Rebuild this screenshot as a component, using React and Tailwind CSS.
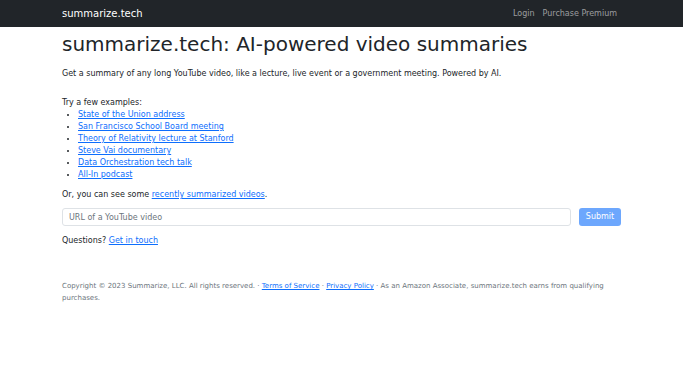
import React from 'react';

const examples = [
  'State of the Union address',
  'San Francisco School Board meeting',
  'Theory of Relativity lecture at Stanford',
  'Steve Vai documentary',
  'Data Orchestration tech talk',
  'All-In podcast',
];

export default function App() {
  return (
    <div className="min-h-screen bg-white text-[#212529] font-['DejaVu_Sans',sans-serif] text-[8px] leading-[12px]">
      <nav className="h-[27px] bg-[#212529] flex items-center justify-between px-[62px]">
        <a href="#" className="text-white text-[10px]">summarize.tech</a>
        <div className="flex gap-[8px] text-[8px] text-[rgba(255,255,255,0.55)] pr-[4px]">
          <a href="#">Login</a>
          <a href="#">Purchase Premium</a>
        </div>
      </nav>

      <main className="px-[62px]">
        <h1 className="text-[20px] leading-[24px] mt-[5px] mb-[6px] font-normal">
          summarize.tech: AI-powered video summaries
        </h1>
        <p className="mt-[12px]">
          Get a summary of any long YouTube video, like a lecture, live event or a government meeting. Powered by AI.
        </p>

        <div className="mt-[17px]">
          Try a few examples:
          <ul className="list-disc pl-[16px] marker:text-[6px]">
            {examples.map(e => (
              <li key={e}>
                <a href="#" className="text-[#0d6efd] underline">{e}</a>
              </li>
            ))}
          </ul>
        </div>

        <p className="mt-[8px]">
          Or, you can see some <a href="#" className="text-[#0d6efd] underline">recently summarized videos</a>.
        </p>

        <form className="flex gap-[8px] mt-[7px]" onSubmit={e => e.preventDefault()}>
          <input
            type="text"
            placeholder="URL of a YouTube video"
            className="flex-1 h-[18px] border border-[#dee2e6] rounded-[3px] px-[6px] text-[8px] placeholder:text-[#6c757d] outline-none"
          />
          <button
            type="submit"
            disabled
            className="w-[42px] h-[18px] rounded-[3px] bg-[#0d6efd] opacity-60 text-white text-[8px]"
          >
            Submit
          </button>
        </form>

        <p className="mt-[9px]">
          Questions? <a href="#" className="text-[#0d6efd] underline">Get in touch</a>
        </p>

        <footer className="mt-[33px] text-[7px] leading-[12px] text-[#6c757d] pr-[10px]">
          Copyright © 2023 Summarize, LLC. All rights reserved. · <a href="#" className="text-[#0d6efd] underline">Terms of Service</a> · <a href="#" className="text-[#0d6efd] underline">Privacy Policy</a> · As an Amazon Associate, summarize.tech earns from qualifying purchases.
        </footer>
      </main>
    </div>
  );
}
